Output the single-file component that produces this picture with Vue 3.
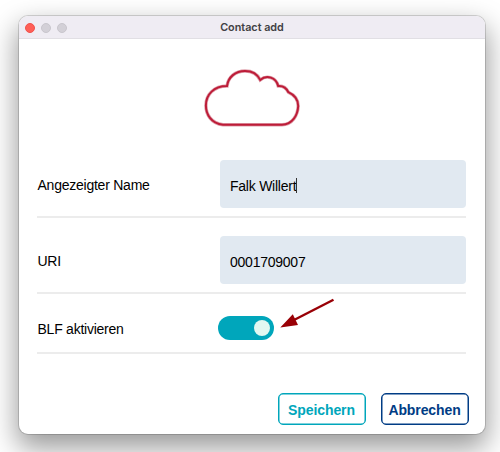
<template>
  <div class="desktop">
    <div class="window">
      <header class="titlebar">
        <div class="lights">
          <span class="light close"></span>
          <span class="light"></span>
          <span class="light"></span>
        </div>
        <h1 class="title">Contact add</h1>
      </header>

      <main class="content">
        <div class="logo">
          <svg width="98" height="60" viewBox="0 0 98 60">
            <path class="cloud-halo" :d="cloud" />
            <path class="cloud-line" :d="cloud" />
          </svg>
        </div>

        <div
          v-for="field in fields"
          :key="field.id"
          class="row"
          :class="`row-${field.id}`"
        >
          <span class="label">{{ field.label }}</span>
          <div class="input">
            <span class="value">{{ field.value }}</span>
            <span v-if="field.focused" class="caret"></span>
          </div>
        </div>

        <div class="row row-blf">
          <span class="label">BLF aktivieren</span>
          <button
            class="toggle"
            :class="{ on: blfActive }"
            role="switch"
            :aria-checked="blfActive"
            @click="blfActive = !blfActive"
          >
            <span class="knob"></span>
          </button>
          <svg class="arrow" width="56" height="32" viewBox="0 0 56 32">
            <path d="M53.5 1.7 L14 22" stroke="#990006" stroke-width="2.4" />
            <path d="M0.3 29.4 L12.8 16.3 L18 27 Z" fill="#990006" />
          </svg>
        </div>

        <footer class="actions">
          <button class="btn save">Speichern</button>
          <button class="btn cancel">Abbrechen</button>
        </footer>
      </main>
    </div>
  </div>
</template>

<script setup>
import { ref } from 'vue'

const cloud =
  'M20 56.7 C8 55.5 2.9 46 2.9 37.5 C2.9 26.5 11 18 24 18 C25.2 9 32.5 3 42 3 C49 3 54.4 6.2 57.2 11.9 C63.5 6.6 73 9.2 75.2 18 C80 17.6 83.4 20 85.4 24.2 C91.5 27 95.2 32.2 95.2 38 C94.8 47 89.5 56.7 79 56.7 Z'

const fields = ref([
  { id: 'name', label: 'Angezeigter Name', value: 'Falk Willert', focused: true },
  { id: 'uri', label: 'URI', value: '0001709007', focused: false }
])

const blfActive = ref(true)
</script>

<style>
body {
  margin: 0;
  background: #fff;
}
</style>

<style scoped>
.desktop {
  box-sizing: border-box;
  width: 500px;
  height: 452px;
  padding: 16px 15px 18px 19px;
  overflow: hidden;
  font-family: "Liberation Sans", Arial, sans-serif;
}

.window {
  display: flex;
  flex-direction: column;
  height: 418px;
  background: #fff;
  border-radius: 9px;
  box-shadow: 0 0 0 1px rgba(0, 0, 0, 0.15), 0 12px 28px 2px rgba(0, 0, 0, 0.4);
}

.titlebar {
  display: grid;
  grid-template-columns: 100px 1fr 100px;
  align-items: center;
  box-sizing: border-box;
  height: 23px;
  background: #efecf3;
  border-bottom: 1px solid #e1dfe4;
  border-radius: 9px 9px 0 0;
}

.lights {
  display: flex;
  gap: 6px;
  padding-left: 5.5px;
}

.light {
  box-sizing: border-box;
  width: 10px;
  height: 10px;
  background: #d3d0d7;
  border: 1px solid #c9c6cd;
  border-radius: 50%;
}

.close {
  background: #ff5f57;
  border-color: #f0524c;
}

.title {
  margin: 0;
  padding-top: 1px;
  color: #414044;
  font-family: Inter, sans-serif;
  font-size: 10.8px;
  font-weight: 600;
  line-height: 22px;
  text-align: center;
}

.content {
  padding: 0 19px 0 18px;
}

.logo {
  display: flex;
  box-sizing: border-box;
  height: 115px;
  padding: 29px 0 0 166px;
}

.cloud-halo {
  fill: none;
  stroke: #dfa0ab;
  stroke-width: 3.4;
}

.cloud-line {
  fill: none;
  stroke: #bd1c38;
  stroke-width: 2;
}

.row {
  display: flex;
  align-items: center;
  box-sizing: border-box;
  border-bottom: 2px solid #ececec;
}

.row-name {
  height: 64px;
  padding-bottom: 2px;
}

.row-uri {
  height: 76px;
  padding-top: 10px;
}

.row-blf {
  position: relative;
  height: 60px;
  padding-top: 10px;
}

.label,
.value {
  color: #000;
  font-size: 14px;
  letter-spacing: -0.24px;
}

.label {
  flex: none;
  box-sizing: border-box;
  width: 183px;
  padding: 1px 0 0 0.5px;
}

.input {
  display: flex;
  align-items: center;
  box-sizing: border-box;
  width: 246px;
  height: 48px;
  padding: 3px 10px 0;
  background: #e1e9f1;
  border-radius: 4px;
}

.caret {
  width: 1px;
  height: 15px;
  background: #333;
}

.toggle {
  display: flex;
  align-items: center;
  width: 56px;
  height: 24px;
  margin-left: -1.7px;
  padding: 0 4px;
  background: #b8c4cc;
  border: 0;
  border-radius: 12px;
}

.toggle.on {
  justify-content: flex-end;
  background: #00a6bb;
}

.knob {
  width: 16px;
  height: 16px;
  background: #e2f8f1;
  border-radius: 50%;
}

/* pointer next to the switch */
.arrow {
  position: absolute;
  top: 4px;
  left: 243px;
}

.actions {
  display: flex;
  justify-content: flex-end;
  gap: 15px;
  margin: 39px -2.5px 0 0;
}

.btn {
  box-sizing: border-box;
  width: 88px;
  height: 32px;
  padding: 1px 0 0;
  background: #fff;
  border: 1.5px solid;
  border-radius: 5px;
  font-family: inherit;
  font-size: 14px;
  font-weight: 700;
  letter-spacing: -0.1px;
  box-shadow: inset 0 0 0 0.5px currentColor;
}

.save {
  color: #00a6bb;
  border-color: #00a6bb;
}

.cancel {
  color: #003c85;
  border-color: #003c85;
}
</style>
